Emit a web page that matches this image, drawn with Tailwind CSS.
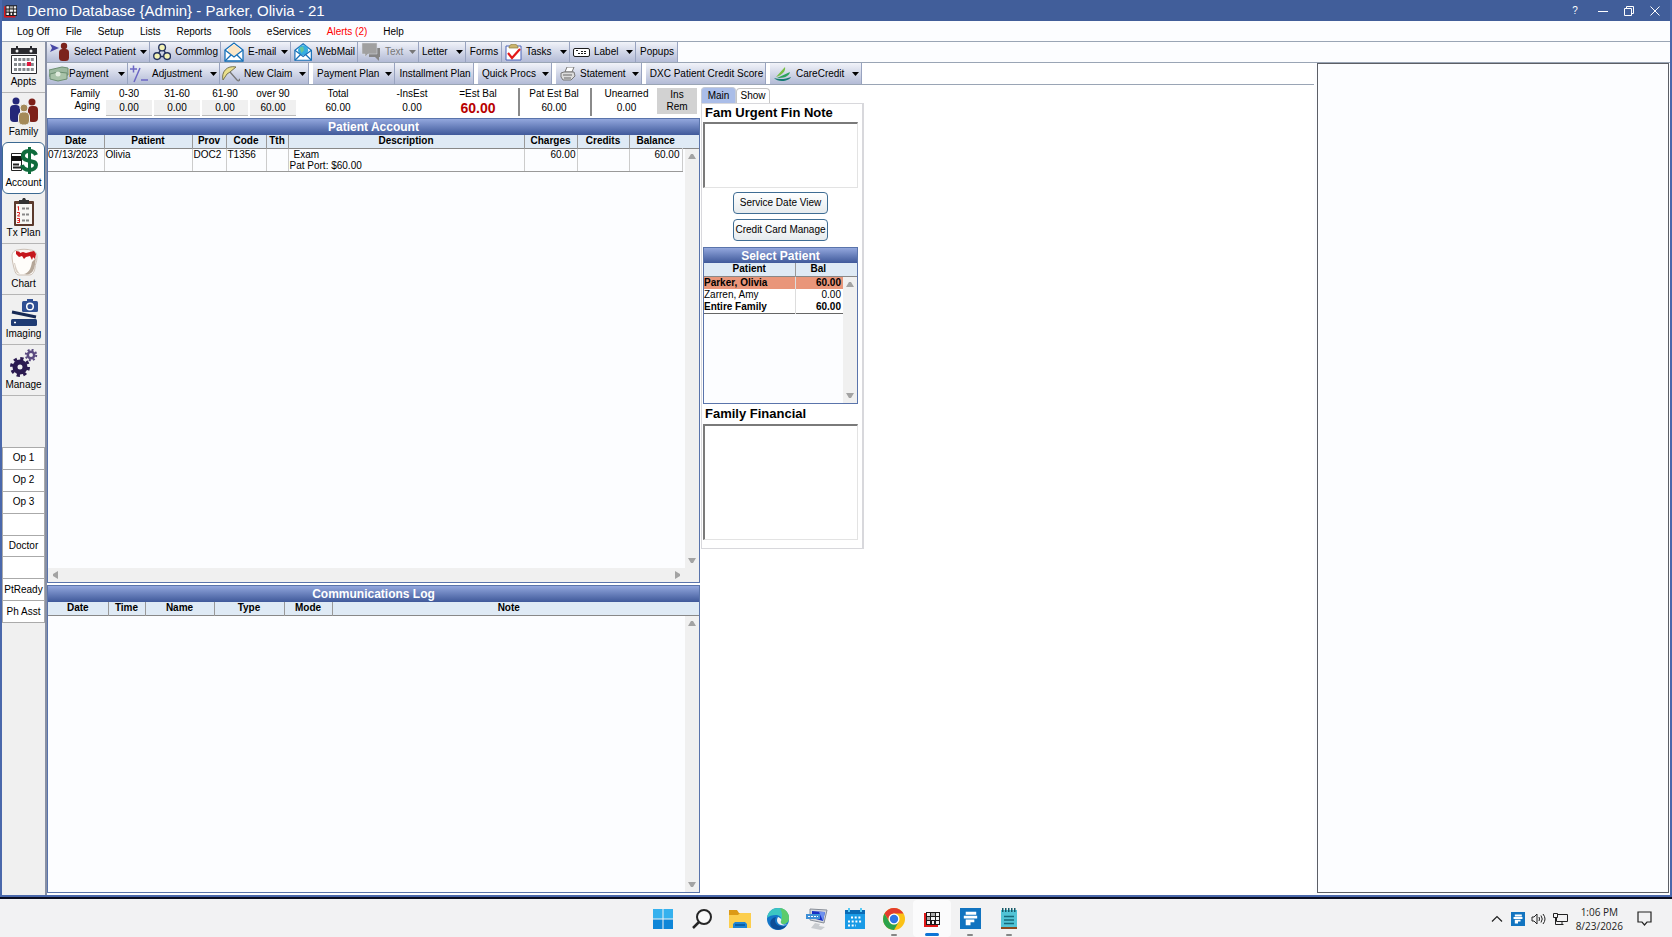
<!DOCTYPE html>
<html lang="en">
<head>
  <meta charset="UTF-8" />
  <title>Demo Database {Admin} - Parker, Olivia - 21</title>
  <script src="https://cdn.jsdelivr.net/npm/@tailwindcss/browser@4"></script>
</head>
<body class="min-h-screen flex flex-col bg-[#fcfdff] font-['Liberation_Sans',Arial,sans-serif] text-[10px] leading-3 text-black">

  <!-- shared symbols -->
  <svg class="hidden">
    <symbol id="down" viewBox="0 0 7 4"><path d="M0 0h7L3.500 4z" fill="currentColor" /></symbol>
    <symbol id="up" viewBox="0 0 8 6"><path d="M0 6h8L5 1H3z" fill="#a3a3a3" /></symbol>
    <symbol id="logo" viewBox="0 0 16 16">
      <path d="M0 2h2v12h12v2H0z" fill="#e01818" />
      <path d="M2 1h14v13H2z" fill="#1c1a1a" />
      <path d="M3 2h3v3H3zM12 2h3v3h-3zM7 6h4v3H7zM12 6h3v3h-3zM3 10h3v3H3zM8 10h2v3H8zM12 10h3v3h-3z" fill="#f4f4f4" />
      <path d="M7 2h4v3H7zM3 6h3v3H3z" fill="#a9a9a9" />
    </symbol>
    <symbol id="bluebox" viewBox="0 0 22 22">
      <path d="M0 0h22v22H0z" fill="#1274c0" />
      <path d="M6 4h11v3H6zM4 8h14v3H4zM6 12h9v3H6zM6 15h5v3H6z" fill="#fff" />
    </symbol>
  </svg>

  <div class="flex-1 flex flex-col border-x-2 border-b-2 border-[#4a68ab]">
    <!-- title bar -->
    <header class="h-[21px] flex items-center bg-[#415e9a] text-white">
      <svg class="ml-0.5 mr-2.5 w-[13px] h-[14px]"><use href="#logo" /></svg>
      <h1 class="text-[15px] leading-5">Demo Database {Admin} - Parker, Olivia - 21</h1>
      <div class="ml-auto mr-2.5 flex items-center gap-4">
        <button aria-label="Help" class="w-2.5 mr-0.5">?</button>
        <button aria-label="Minimize"><svg class="w-2.5 h-2.5" viewBox="0 0 10 10"><path d="M0 5.500h10" stroke="#fff" /></svg></button>
        <button aria-label="Restore"><svg class="w-2.5 h-2.5" viewBox="0 0 10 10" fill="none" stroke="#fff"><path d="M.5 2.500h7v7h-7zM2.500 2.500v-2h7v7h-2" /></svg></button>
        <button aria-label="Close"><svg class="w-2.5 h-2.5" viewBox="0 0 10 10" stroke="#fff"><path d="M.5 .5l9 9M9.500 .5l-9 9" /></svg></button>
      </div>
    </header>

    <!-- menu -->
    <nav class="h-[21px] flex items-center gap-4 pl-[15px] pt-0.5 border-b border-[#9aa5b5]">
      <button>Log Off</button>
      <button>File</button>
      <button>Setup</button>
      <button>Lists</button>
      <button>Reports</button>
      <button>Tools</button>
      <button>eServices</button>
      <button class="text-[#f00]">Alerts (2)</button>
      <button>Help</button>
    </nav>

    <main class="flex-1 flex">
      <!-- module bar -->
      <aside class="w-[45px] shrink-0 bg-[#f0f0f0] border-r-2 border-[#8890a5]">
        <div class="h-[354px] flex flex-col">
          <button class="flex-1 flex flex-col items-center justify-between pt-1 pb-1 border-b border-[#b5b5b5]">
            <svg class="w-7 h-7" viewBox="0 0 28 28">
              <path d="M1 2h26v6H1z" fill="#2a2a2e" /><path d="M6 0h2v5H6zM20 0h2v5h-2z" fill="#2a2a2e" /><circle cx="7" cy="5" r="1.500" fill="#eee" /><circle cx="21" cy="5" r="1.500" fill="#eee" />
              <path d="M1.500 9.500h25v18h-25z" fill="#fff" stroke="#2a2a2e" />
              <path d="M4 13.500h20M4 18.500h20M4 23.500h20" stroke="#868a8e" stroke-width="3" stroke-dasharray="3 1.200" />
              <path d="M17 16h4v4h-4z" fill="#e1173c" />
            </svg>
            Appts
          </button>
          <button class="flex-1 flex flex-col items-center justify-between pt-1 pb-1">
            <svg class="w-7 h-7" viewBox="0 0 28 28">
              <circle cx="6" cy="4" r="3.500" fill="#242678" /><rect x="0" y="8" width="10" height="17" rx="4" fill="#242678" />
              <circle cx="22" cy="5" r="3.500" fill="#7c2019" /><rect x="18" y="9" width="10" height="16" rx="4" fill="#7c2019" />
              <circle cx="14" cy="11" r="4" fill="#a58a58" stroke="#f0f0f0" /><rect x="8.500" y="15" width="11" height="13" rx="4" fill="#a58a58" stroke="#f0f0f0" />
            </svg>
            Family
          </button>
          <button class="flex-1 flex flex-col items-center justify-between pt-1 pb-1 bg-white border border-[#3c6a92] rounded-md">
            <svg class="w-7 h-7" viewBox="0 0 28 28">
              <path d="M1.500 6.500h10v17h-10z" fill="#fff" stroke="#222" /><path d="M1 9h11v5H1z" fill="#111" /><path d="M3 17.500h6M3 20.500h10" stroke="#222" stroke-width="2" />
              <path d="M26 8c-1-3-4-4-7-4-4 0-6 2-6 5 0 7 13 3 13 9 0 3-3 5-7 5-3 0-6-1-7-5" fill="none" stroke="#0f6b3c" stroke-width="4" /><path d="M18 0h3v27h-3z" fill="#0f6b3c" />
            </svg>
            Account
          </button>
          <button class="flex-1 flex flex-col items-center justify-between pt-1 pb-1 border-b border-[#b5b5b5]">
            <svg class="w-7 h-7" viewBox="0 0 28 28">
              <rect x="4" y="3" width="20" height="25" rx="1" fill="#5b3a2c" /><path d="M6 6h16v20H6z" fill="#f8f8f5" /><path d="M9 2h3l1-2h2l1 2h3v4H9z" fill="#333" />
              <path d="M12 10.500h8M12 16.500h8M12 22.500h8" stroke="#888" stroke-width="2" stroke-dasharray="3 1" />
              <path d="M7.500 9l1-.5v4M7 14.500h2.500v1.500l-2 2H10M7 20.500h2.500v4H7M7.500 22.500h2" fill="none" stroke="#e02020" />
            </svg>
            Tx Plan
          </button>
          <button class="flex-1 flex flex-col items-center justify-between pt-1 pb-1 border-b border-[#b5b5b5]">
            <svg class="w-7 h-7" viewBox="0 0 28 28">
              <path d="M2 8c0-4 3-6 6-6 4-1 8-1 12 0 5 0 7 3 7 7 0 5-2 7-2 11-1 5-3 7-6 7H9c-3 0-4-3-5-7C3 16 2 12 2 8z" fill="#fffdfa" stroke="#cbbfb4" />
              <path d="M26 10c-1 6-1 9-3 13-2 3-5 4-9 3 5-1 7-6 8-12z" fill="#b5a799" /><path d="M4 15c1 4 1 8 3 10l3 1c-3-3-4-7-5-11z" fill="#d9cec4" />
              <path d="M6 3l5 1 4-1 4 1 5-1 2 3-1 5-2-2-1 3-2-4-4 1-2 2-2-3-3 1-3-3z" fill="#c5161c" />
              <path d="M9 2h10l1 2-4 1-3-1-3 1z" fill="#fdf6f2" />
            </svg>
            Chart
          </button>
          <button class="flex-1 flex flex-col items-center justify-between pt-1 pb-1 border-b border-[#b5b5b5]">
            <svg class="w-7 h-7" viewBox="0 0 28 28">
              <rect x="12" y="2" width="16" height="11" rx="1.500" fill="#2f4f93" /><path d="M17 0h6v3h-6z" fill="#2f4f93" /><circle cx="20" cy="7.500" r="3.300" fill="none" stroke="#fff" stroke-width="1.500" />
              <path d="M2 13l24 5" stroke="#172a55" stroke-width="3" /><rect x="1" y="20" width="26" height="7" rx="1.500" fill="#1f3b73" /><path d="M4 23.500h2" stroke="#fff" stroke-width="1.500" />
            </svg>
            Imaging
          </button>
          <button class="flex-1 flex flex-col items-center justify-between pt-1 pb-1 border-b border-[#b5b5b5]">
            <svg class="w-7 h-7" viewBox="0 0 28 28" fill="none">
              <circle cx="10" cy="18" r="5" stroke="#2b1a50" stroke-width="5" /><circle cx="10" cy="18" r="8.500" stroke="#2b1a50" stroke-width="3" stroke-dasharray="3.300 3.375" />
              <circle cx="21" cy="6" r="3.200" stroke="#5a4a80" stroke-width="2.500" /><circle cx="21" cy="6" r="5.200" stroke="#5a4a80" stroke-width="2" stroke-dasharray="2 2.080" />
            </svg>
            Manage
          </button>
        </div>

        <!-- messaging buttons -->
        <div class="mt-[51px] h-[176px] grid grid-rows-8 gap-px p-px bg-[#aaa]">
          <button class="bg-white">Op 1</button>
          <button class="bg-white">Op 2</button>
          <button class="bg-white">Op 3</button>
          <button class="bg-white" aria-label="Empty"></button>
          <button class="bg-white">Doctor</button>
          <button class="bg-white" aria-label="Empty"></button>
          <button class="bg-white whitespace-nowrap">PtReady</button>
          <button class="bg-white whitespace-nowrap">Ph Asst</button>
        </div>
      </aside>

      <div class="flex-1 flex flex-col">
        <!-- main toolbar -->
        <div class="h-[21px] flex border-b border-[#9aa5b5] whitespace-nowrap *:flex *:items-center *:gap-1 *:pl-[3px] *:pr-0.5 *:bg-linear-to-b *:from-[#f1f3f9] *:to-[#b3bbd6] *:border-r *:border-[#98a3c0]">
          <button class="w-[103px]">
            <svg class="w-5 h-5" viewBox="0 0 20 20"><path d="M0 2l9 4-9 4 2-4z" fill="#4747a5" /><circle cx="14" cy="4" r="3.200" fill="#7c231c" /><rect x="9" y="7" width="10" height="12" rx="3.500" fill="#7c231c" /></svg>
            Select Patient
            <svg class="ml-auto w-[7px] h-1"><use href="#down" /></svg>
          </button>
          <button class="w-[71px]">
            <svg class="w-5 h-5" viewBox="0 0 20 20" fill="#f3f2b4" stroke="#23315c" stroke-width="1.500"><path d="M10 5L4 15h12z" fill="none" /><circle cx="10" cy="5" r="3.700" /><circle cx="4.500" cy="14.500" r="3.700" /><circle cx="15.500" cy="14.500" r="3.700" /></svg>
            Commlog
          </button>
          <button class="w-[70px]">
            <svg class="w-5 h-5" viewBox="0 0 20 20" stroke="#1670b8" stroke-width="1.300"><path d="M1 8l9-7 9 7v11H1z" fill="#fff" /><path d="M4 10V7l6-5 6 5v3l-6 4z" fill="#fbe6c6" stroke="none" /><path d="M1 8l9 7 9-7M1 19l6-6M19 19l-6-6" fill="none" /></svg>
            E-mail
            <svg class="ml-auto w-[7px] h-1"><use href="#down" /></svg>
          </button>
          <button class="w-[67px]">
            <svg class="w-5 h-5" viewBox="0 0 20 20" stroke="#1670b8" stroke-width="1.300"><path d="M1 8l9-7 9 7v11H1z" fill="#fff" /><circle cx="10" cy="8" r="5.500" fill="#35aee0" stroke="none" /><path d="M6 5l4-1 1 4-3 3z" fill="#67c59b" stroke="none" /><path d="M1 8l9 7 9-7M1 19l6-6M19 19l-6-6" fill="none" /></svg>
            WebMail
          </button>
          <button class="w-[61px] text-[#777]">
            <svg class="w-5 h-5" viewBox="0 0 20 20"><path d="M8 6h11v9h-1v4l-4-4H8z" fill="#858585" /><path d="M1 1h15v11H7l-3 3v-3H1z" fill="#a0a0a0" stroke="#d9dce6" stroke-width=".5" /></svg>
            Text
            <svg class="ml-auto w-[7px] h-1"><use href="#down" /></svg>
          </button>
          <button class="w-[47px] pl-1">
            Letter
            <svg class="ml-auto w-[7px] h-1"><use href="#down" /></svg>
          </button>
          <button class="w-9 justify-center">Forms</button>
          <button class="w-[68px]">
            <svg class="w-[17px] h-[17px]" viewBox="0 0 17 17"><path d="M1 2h15v14H1z" fill="#fff" stroke="#4a63b8" /><path d="M4 3c1-4 8-4 9 0v1H4z" fill="#c9b46c" stroke="#8c7a3e" stroke-width=".7" /><path d="M3 9l4 5 8-9" fill="none" stroke="#e31818" stroke-width="2.200" /></svg>
            Tasks
            <svg class="ml-auto w-[7px] h-1"><use href="#down" /></svg>
          </button>
          <button class="w-[66px]">
            <svg class="w-[17px] h-[9px]" viewBox="0 0 17 9" fill="none" stroke="#1c1c1c"><rect x=".5" y=".5" width="16" height="8" rx="1.500" fill="#fff" /><path d="M3 2.500h3M8 3.500h6M5 5.500h8" stroke-dasharray="2 1" /></svg>
            Label
            <svg class="ml-auto w-[7px] h-1"><use href="#down" /></svg>
          </button>
          <button class="w-[42px] justify-center">Popups</button>
        </div>

        <div class="flex-1 flex">
          <div class="flex-1 flex flex-col bg-white">
            <!-- account toolbar -->
            <div class="h-[22px] flex border-b border-[#9aa5b5] whitespace-nowrap *:flex *:items-center *:gap-1 *:pl-1 *:pr-0.5 *:bg-linear-to-b *:from-[#f1f3f9] *:to-[#b3bbd6] *:border-r *:border-[#98a3c0]">
              <button class="w-[81px]">
                <svg class="w-5 h-4 -ml-0.5 -mr-1" viewBox="0 0 20 16"><path d="M0 4l13-3 6 1v7L6 12 0 10z" fill="#9db9a0" stroke="#6d8f72" /><path d="M1 8l8-2 9 1v6l-9 2-8-2z" fill="#a9c3a9" stroke="#6d8f72" /><circle cx="9" cy="8" r="2.500" fill="#e3ede0" /></svg>
                Payment
                <svg class="ml-auto w-[7px] h-1"><use href="#down" /></svg>
              </button>
              <button class="w-[92px]">
                <svg class="w-[18px] h-[18px] -ml-0.5" viewBox="0 0 18 18" stroke="#6c67c4" stroke-width="1.500"><path d="M0 4h7M3.500 .5v7M4 17L10 3M11 15h7" /></svg>
                Adjustment
                <svg class="ml-auto w-[7px] h-1"><use href="#down" /></svg>
              </button>
              <button class="w-[89px]">
                <svg class="w-[18px] h-[18px] -ml-0.5" viewBox="0 0 18 18"><path d="M1 15C-1 7 5 0 14 2L8 7l-3 2z" fill="#eadf8b" stroke="#77744f" /><path d="M8 7l7 8c2 2 3 0 2-1" stroke="#777" stroke-width="1.300" fill="none" /></svg>
                New Claim
                <svg class="ml-auto w-[7px] h-1"><use href="#down" /></svg>
              </button>
              <button class="ml-1 w-[82px]">
                Payment Plan
                <svg class="ml-auto w-[7px] h-1"><use href="#down" /></svg>
              </button>
              <button class="w-[79px] justify-center">Installment Plan</button>
              <button class="ml-1 w-[74px]">
                Quick Procs
                <svg class="ml-auto w-[7px] h-1"><use href="#down" /></svg>
              </button>
              <button class="ml-1 w-[86px]">
                <svg class="w-4 h-3.5" viewBox="0 0 16 14"><path d="M5 5l2-5h7l-2 5z" fill="#fff" stroke="#777" /><path d="M1 6l3-1h10l1 4-4 4H3l-2-3z" fill="#dcdcdc" stroke="#777" /><path d="M3 8h9M4 11h7" stroke="#666" /></svg>
                Statement
                <svg class="ml-auto w-[7px] h-1"><use href="#down" /></svg>
              </button>
              <button class="ml-1 w-[120px] justify-center">DXC Patient Credit Score</button>
              <button class="ml-1 w-[92px]">
                <svg class="w-[18px] h-[14px]" viewBox="0 0 18 14"><path d="M2 10L11 0c1 4-3 8-9 10z" fill="#76c043" /><path d="M3 11L16 5c-1 5-7 6-13 6z" fill="#2ba35b" /><path d="M0 11c6 2 12 1 17-1-1 4-13 6-17 1z" fill="#167a72" /></svg>
                CareCredit
                <svg class="ml-auto w-[7px] h-1"><use href="#down" /></svg>
              </button>
            </div>

            <div class="flex-1 flex gap-px">
              <div class="w-[653px] shrink-0 flex flex-col">
                <!-- aging -->
                <div class="h-[33px] flex pt-[3px] text-center">
                  <div class="w-[59px] pr-1.5 text-right">Family<br>Aging</div>
                  <div class="w-12 pr-0.5">0-30<div class="h-4 py-0.5 bg-[#f0f0f0] border-b border-[#bbb]">0.00</div></div>
                  <div class="w-12 pr-0.5">31-60<div class="h-4 py-0.5 bg-[#f0f0f0] border-b border-[#bbb]">0.00</div></div>
                  <div class="w-12 pr-0.5">61-90<div class="h-4 py-0.5 bg-[#f0f0f0] border-b border-[#bbb]">0.00</div></div>
                  <div class="w-12 pr-0.5">over 90<div class="h-4 py-0.5 bg-[#f0f0f0] border-b border-[#bbb]">60.00</div></div>
                  <div class="w-20">Total<div class="py-0.5">60.00</div></div>
                  <div class="w-[68px]">-InsEst<div class="py-0.5">0.00</div></div>
                  <div class="w-16">=Est Bal<div class="py-0.5 text-[14px] leading-3 font-bold text-[#b80000]">60.00</div></div>
                  <div class="w-2.5 h-7 border-r-2 border-[#8a8a8a]"></div>
                  <div class="w-[72px] h-7 pr-0.5 border-r-2 border-[#8a8a8a]">Pat Est Bal<div class="py-0.5">60.00</div></div>
                  <div class="w-[65px] pl-1">Unearned<div class="py-0.5">0.00</div></div>
                  <button class="w-10 h-[26px] bg-[#d2d2d2]">Ins<br>Rem</button>
                </div>

                <!-- patient account grid -->
                <section class="h-[465px] flex flex-col border border-[#5a74ab] bg-[#fcfdff]">
                  <h2 class="h-4 shrink-0 text-center text-xs leading-4 font-bold text-white bg-linear-to-b from-[#93a7dd] to-[#40599a]">Patient Account</h2>
                  <div class="flex-1 flex relative">
                    <div class="flex-1">
                      <table class="w-full table-fixed">
                        <colgroup>
                          <col class="w-14"><col class="w-[88px]"><col class="w-[34px]"><col class="w-10"><col class="w-[22px]"><col><col class="w-[53px]"><col class="w-[52px]"><col class="w-[53px]"><col class="w-[17px]">
                        </colgroup>
                        <thead>
                          <tr class="h-[13px] bg-[#dfeaf5] border-b border-[#888] *:p-0 *:border-r *:border-[#999]">
                            <th>Date</th><th>Patient</th><th>Prov</th><th>Code</th><th>Tth</th><th>Description</th><th>Charges</th><th>Credits</th><th class="border-r-0!">Balance</th><th class="border-r-0!"></th>
                          </tr>
                        </thead>
                        <tbody>
                          <tr class="align-top leading-[11px] whitespace-nowrap *:border-r *:border-[#ccc] *:border-b *:border-b-[#999] *:last:border-0">
                            <td>07/13/2023</td><td class="pl-px">Olivia</td><td class="pl-px">DOC2</td><td class="pl-px">T1356</td><td></td>
                            <td class="pl-px"><span class="pl-1">Exam</span><br>Pat Port: $60.00</td>
                            <td class="pr-px text-right">60.00</td><td></td><td class="pr-0.5 text-right">60.00</td><td></td>
                          </tr>
                        </tbody>
                      </table>
                    </div>
                    <div class="absolute right-0 top-3.5 bottom-0 w-3.5 flex flex-col items-center justify-between bg-[#f0f0f0] py-1">
                      <svg class="w-2 h-1.5"><use href="#up" /></svg>
                      <svg class="w-2 h-1.5 rotate-180"><use href="#up" /></svg>
                    </div>
                  </div>
                  <div class="h-3.5 flex items-center justify-between pl-[3px] pr-[17px] bg-[#f0f0f0]">
                    <svg class="w-2 h-1.5 -rotate-90"><use href="#up" /></svg>
                    <svg class="w-2 h-1.5 rotate-90"><use href="#up" /></svg>
                  </div>
                </section>

                <!-- communications log grid -->
                <section class="mt-0.5 mb-0.5 flex-1 flex flex-col border border-[#5a74ab] bg-[#fcfdff]">
                  <h2 class="h-4 shrink-0 text-center text-xs leading-4 font-bold text-white bg-linear-to-b from-[#93a7dd] to-[#40599a]">Communications Log</h2>
                  <table class="w-full table-fixed">
                    <colgroup>
                      <col class="w-[60px]"><col class="w-[37px]"><col class="w-[69px]"><col class="w-[70px]"><col class="w-12"><col><col class="w-3.5">
                    </colgroup>
                    <thead>
                      <tr class="h-[13px] bg-[#dfeaf5] border-b border-[#888] *:p-0 *:border-r *:border-[#999]">
                        <th>Date</th><th>Time</th><th>Name</th><th>Type</th><th>Mode</th><th class="border-r-0!">Note</th><th class="border-r-0!"></th>
                      </tr>
                    </thead>
                  </table>
                  <div class="flex-1 ml-auto w-3.5 flex flex-col items-center justify-between bg-[#f0f0f0] py-1">
                    <svg class="w-2 h-1.5"><use href="#up" /></svg>
                    <svg class="w-2 h-1.5 rotate-180"><use href="#up" /></svg>
                  </div>
                </section>
              </div>

              <!-- notes and family -->
              <div class="w-[163px] shrink-0 pt-0.5">
                <div class="flex items-end">
                  <button class="w-[35px] h-4 bg-[#aabde8] border border-b-0 border-[#c5cbd8] rounded-t">Main</button>
                  <button class="w-[34px] h-[15px] border border-b-0 border-[#c5c5c5] rounded-t">Show</button>
                </div>
                <div class="border border-r-2 border-[#d8d8dc] pl-px pr-1 pb-2">
                  <label for="urgent" class="block h-[18px] pl-0.5 text-[13px] leading-[18px] font-bold whitespace-nowrap">Fam Urgent Fin Note</label>
                  <textarea id="urgent" class="block w-full h-[66px] resize-none bg-white border border-[#e3e3e3] border-t-[#7a7a7a] border-l-[#7a7a7a] border-t-2 border-l-2"></textarea>
                  <div class="mt-1 flex flex-col items-center gap-[5px] whitespace-nowrap">
                    <button class="w-[95px] h-[22px] rounded border border-[#3f6d94] bg-linear-to-b from-white to-[#e6ebee]">Service Date View</button>
                    <button class="w-[95px] h-[22px] rounded border border-[#3f6d94] bg-linear-to-b from-white to-[#e6ebee]">Credit Card Manage</button>
                  </div>
                  <section class="mt-1.5 h-[157px] flex flex-col border border-[#5a74ab] bg-[#fcfdff]">
                    <h2 class="h-[15px] shrink-0 text-center text-xs leading-4 font-bold text-white bg-linear-to-b from-[#93a7dd] to-[#40599a]">Select Patient</h2>
                    <div class="flex-1 relative">
                      <table class="w-full table-fixed">
                        <colgroup><col class="w-[91px]"><col><col class="w-4"></colgroup>
                        <thead>
                          <tr class="h-[13px] bg-[#dfeaf5] border-b border-[#888] *:p-0"><th class="border-r border-[#999]">Patient</th><th>Bal</th><th></th></tr>
                        </thead>
                        <tbody class="*:*:p-0">
                          <tr class="bg-[#e9967a] font-bold"><td class="border-r border-[#ddd]">Parker, Olivia</td><td class="text-right">60.00</td><td></td></tr>
                          <tr class="bg-white"><td class="border-r border-[#ddd]">Zarren, Amy</td><td class="text-right">0.00</td><td></td></tr>
                          <tr class="bg-white border-b border-[#666] font-bold"><td class="border-r border-[#ddd]">Entire Family</td><td class="text-right">60.00</td><td></td></tr>
                        </tbody>
                      </table>
                      <div class="absolute right-0 top-3.5 bottom-0 w-3.5 flex flex-col items-center justify-between bg-[#f0f0f0] py-1">
                        <svg class="w-2 h-1.5"><use href="#up" /></svg>
                        <svg class="w-2 h-1.5 rotate-180"><use href="#up" /></svg>
                      </div>
                    </div>
                  </section>
                  <label for="financial" class="block h-5 pl-0.5 text-[13px] leading-5 font-bold">Family Financial</label>
                  <textarea id="financial" class="block w-full h-[116px] resize-none bg-white border border-[#e3e3e3] border-t-[#7a7a7a] border-l-[#7a7a7a] border-t-2 border-l-2"></textarea>
                </div>
              </div>
            </div>
          </div>

          <div class="ml-[3px] mr-px mb-0.5 w-[352px] shrink-0 border border-[#5c5f66] bg-[#fcfdff]"></div>
        </div>
      </div>
    </main>
  </div>

  <!-- taskbar -->
  <footer class="h-10 flex items-center bg-[#f2f2f3] border-t-2 border-[#0a0d20]">
    <div class="flex-1 pl-5"></div>
    <div class="w-96 grid grid-cols-10 h-full pt-px *:flex *:flex-col *:items-center *:justify-center">
      <button aria-label="Start"><svg class="w-[22px] h-[22px]" viewBox="0 0 22 22"><path d="M1 1h9.500v9.500H1zM11.500 1H21v9.500h-9.500z" fill="#35b1ee" /><path d="M1 11.500h9.500V21H1zM11.500 11.500H21V21h-9.500z" fill="#0f86d8" /></svg></button>
      <button aria-label="Search"><svg class="w-[22px] h-[22px]" viewBox="0 0 22 22" fill="none" stroke="#262626" stroke-width="2"><circle cx="13" cy="9" r="7" fill="#fafafa" /><path d="M8 14l-6 6" stroke-width="2.500" /></svg></button>
      <button aria-label="File Explorer"><svg class="w-[22px] h-[22px]" viewBox="0 0 22 22"><path d="M0 2h8l2 3h12v6H0z" fill="#dc9a16" /><path d="M0 7h9l2-2h11v15H0z" fill="#fcce4d" /><path d="M4 20v-4l2-2h10l2 2v4z" fill="#1d83d4" /><path d="M6 17h10" stroke="#0b5fa5" stroke-width="2" /></svg></button>
      <button aria-label="Edge"><svg class="w-[22px] h-[22px]" viewBox="0 0 22 22"><circle cx="11" cy="11" r="11" fill="#1476c9" /><path d="M0 10C1 3 6 0 11 0c7 0 11 5 11 10 0 4-3 6-6 6-2 0-3-1-2-3 1-4-2-6-5-6-4 0-7 1-9 3z" fill="#3cc6c2" /><path d="M13 0c6 1 9 5 9 10 0 4-3 6-6 6-2 0-3-1-2-3 2-5 1-9-1-13z" fill="#5ccb6b" /><path d="M9 9c-3 5 1 11 10 9-4 5-12 5-15 0-2-4 0-8 5-9z" fill="#0d4d97" /><path d="M11 9c-2 3-1 7 3 8 3 1 5 0 7-1-2 1-6 1-7-1-1-1 1-3 0-4s-2-2-3-2z" fill="#f2f2f3" /></svg></button>
      <button aria-label="Remote session"><svg class="w-[22px] h-[22px]" viewBox="0 0 22 22"><path d="M4 1l17 1-3 13-14-3z" fill="#d5d8dd" stroke="#888e98" /><path d="M6 3l13 1-2 9-11-3z" fill="#1730c4" /><path d="M13 4l6 0-2 9z" fill="#6e91ee" /><path d="M0 6h14v5H0z" fill="#3e8fd6" /><path d="M2 8.500h10" stroke="#fff" stroke-dasharray="2 1" /><path d="M9 15l5 1-1 2 6 1-4 3-10-2z" fill="#c9ccd0" /></svg></button>
      <button aria-label="Calendar"><svg class="w-[22px] h-[22px]" viewBox="0 0 22 22"><path d="M1 2h20v19H1z" fill="#1a9be6" /><path d="M1 2h20v4H1z" fill="#0b6bb5" /><path d="M5 0v4M17 0v4" stroke="#54c9f5" stroke-width="2" /><path d="M7 9.500h11M4 13.500h14M4 17.500h8" stroke="#fff" stroke-width="2" stroke-dasharray="2 1.700" /></svg></button>
      <button aria-label="Chrome" class="relative"><svg class="w-[22px] h-[22px]" viewBox="0 0 22 22"><circle cx="11" cy="11" r="11" fill="#fbc116" /><path d="M1.500 5.500A11 11 0 0 1 20.500 5.500H11a5.500 5.500 0 0 0-5 7.500z" fill="#e33b2e" /><path d="M1.500 5.500A11 11 0 0 0 11 22l4.800-8.300a5.500 5.500 0 0 1-9.600 0z" fill="#2ba24c" /><circle cx="11" cy="11" r="5.500" fill="#fff" /><circle cx="11" cy="11" r="4.200" fill="#2f74e5" /></svg><span class="absolute bottom-px w-1.5 h-0.5 rounded bg-[#868686]"></span></button>
      <button aria-label="Open Dental" class="relative bg-[#fbfbfc] rounded"><svg class="w-4 h-4"><use href="#logo" /></svg><span class="absolute bottom-px w-3.5 h-[3px] rounded bg-[#0c74d6]"></span></button>
      <button aria-label="Connector" class="relative"><svg class="w-[21px] h-[21px]"><use href="#bluebox" /></svg><span class="absolute bottom-px w-1.5 h-0.5 rounded bg-[#868686]"></span></button>
      <button aria-label="Notepad" class="relative"><svg class="w-[22px] h-[22px]" viewBox="0 0 22 22"><path d="M3 2h16v17H3z" fill="#51c4d6" /><path d="M3 19h16v2H3z" fill="#8a4b20" /><path d="M4 2h14" stroke="#145a68" stroke-width="4" stroke-dasharray="1.500 1.500" /><path d="M6 8.500h10M6 12h10M6 15.500h10" stroke="#16697a" stroke-width="1.500" /></svg><span class="absolute bottom-px w-1.5 h-0.5 rounded bg-[#868686]"></span></button>
    </div>
    <div class="flex-1 flex items-center justify-end pt-px pr-5 text-[#222]">
      <svg class="w-3 h-2 mr-2" viewBox="0 0 12 8" fill="none" stroke="#222" stroke-width="1.200"><path d="M1 6.500l5-5 5 5" /></svg>
      <svg class="w-[14px] h-[14px] mr-1.5"><use href="#bluebox" /></svg>
      <svg class="w-4 h-3.5 mr-1.5" viewBox="0 0 16 14" fill="none" stroke="#222"><path d="M1 5h2l3-3v10L3 9H1zM8 5q1 2 0 4M10 3.500q2.500 3.500 0 7M12 2q4 5 0 10" /></svg>
      <svg class="w-[15px] h-3 mr-2" viewBox="0 0 15 12" fill="none" stroke="#222"><path d="M5 1.500h9.500v7H3.500V5M.5 .5h4v4h-4zM2.500 4.500v7h8M9 8.500v3" /></svg>
      <div class="text-center leading-[14px] font-['Open_Sans',sans-serif]">1:06 PM<br>8/23/2026</div>
      <svg class="w-[15px] h-[15px] ml-3.5" viewBox="0 0 15 15" fill="none" stroke="#222" stroke-width="1.200"><path d="M1 1h13v10h-4l-2.500 3L5 11H1z" /></svg>
    </div>
  </footer>
</body>
</html>
